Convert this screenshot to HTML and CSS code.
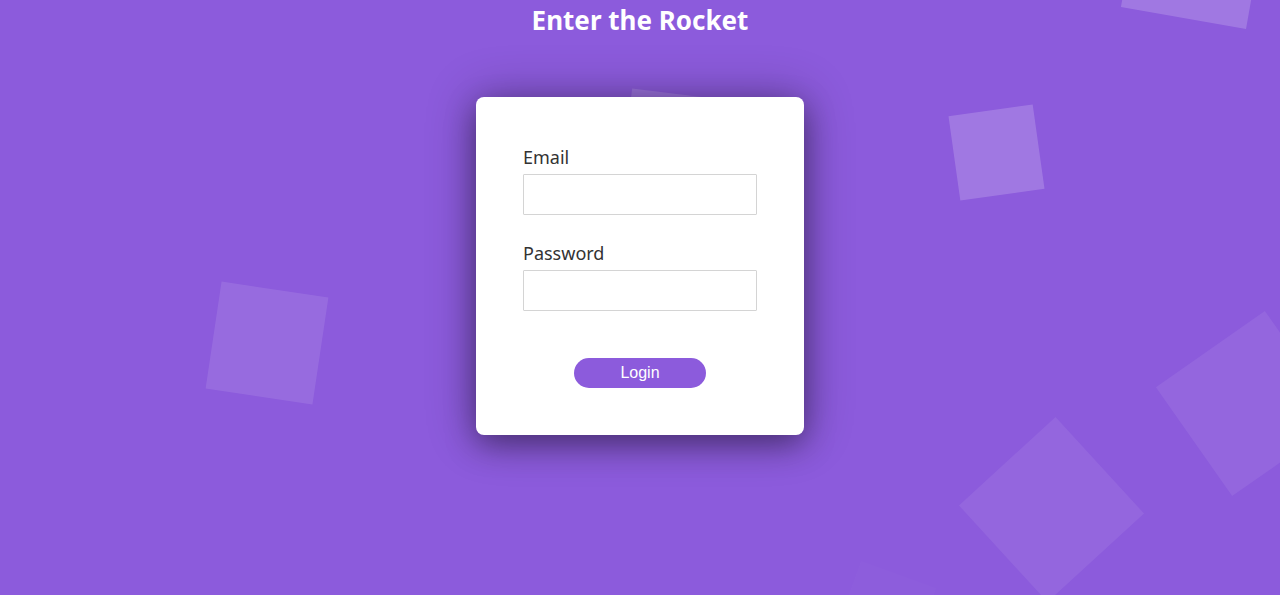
FILE: index.html
```html
<!DOCTYPE html>
<html lang="en">
<head>
    <meta charset="UTF-8">
    <meta name="viewport" content="width=device-width, initial-scale=1.0">
    <title>Enter the Rocket</title>
    <link rel="stylesheet" href="styles.css">
</head>
<body>
    <!-- floating background squares -->
    <ul class="squares">
        <li></li>
        <li></li>
        <li></li>
        <li></li>
        <li></li>
        <li></li>
        <li></li>
    </ul>
    <main class="page">
        <h1 class="title">Enter the Rocket</h1>
        <form class="login-card">
            <div class="field">
                <label for="email">Email</label>
                <input type="email" id="email">
            </div>
            <div class="field">
                <label for="password">Password</label>
                <input type="password" id="password">
            </div>
            <button type="submit" class="login-btn">Login</button>
        </form>
    </main>
</body>
</html>
```

FILE: styles.css
```css
html, body {
    height: 100%;
}

body {
    margin: 0;
    padding: 0;
    font-family: "Noto Sans", "Open Sans", sans-serif;
    background-color: #8c5bdc;
    overflow: hidden;
    position: relative;
}

.squares {
    position: absolute;
    top: 0;
    left: 0;
    width: 100%;
    height: 100%;
    margin: 0;
    padding: 0;
    list-style: none;
    overflow: hidden;
}

.squares li {
    position: absolute;
    display: block;
}

.squares li:nth-child(1) {
    width: 127px;
    height: 127px;
    left: 1131px;
    top: -108px;
    transform: rotate(10deg);
    background: rgba(255, 255, 255, 0.18);
}

.squares li:nth-child(2) {
    width: 85px;
    height: 85px;
    left: 954px;
    top: 110px;
    transform: rotate(-8deg);
    background: rgba(255, 255, 255, 0.18);
}

.squares li:nth-child(3) {
    width: 108px;
    height: 108px;
    left: 213px;
    top: 289px;
    transform: rotate(8.5deg);
    background: rgba(255, 255, 255, 0.1);
}

.squares li:nth-child(4) {
    width: 131px;
    height: 131px;
    left: 986px;
    top: 444px;
    transform: rotate(-42.5deg);
    background: rgba(255, 255, 255, 0.07);
}

.squares li:nth-child(5) {
    width: 133px;
    height: 133px;
    left: 1182px;
    top: 337px;
    transform: rotate(-35deg);
    background: rgba(255, 255, 255, 0.07);
}

.squares li:nth-child(6) {
    width: 80px;
    height: 80px;
    left: 627px;
    top: 93px;
    transform: rotate(7deg);
    background: rgba(255, 255, 255, 0.15);
}

.squares li:nth-child(7) {
    width: 80px;
    height: 80px;
    left: 845px;
    top: 572px;
    transform: rotate(20deg);
    background: rgba(255, 255, 255, 0.015);
}

.page {
    position: relative;
    display: flex;
    flex-direction: column;
    align-items: center;
}

.title {
    margin: 0;
    padding-top: 2px;
    font-size: 26px;
    line-height: 36px;
    font-weight: 700;
    color: #fff;
}

.login-card {
    margin-top: 59px;
    width: 328px;
    box-sizing: border-box;
    padding: 48px 47px 47px;
    background-color: #fff;
    border-radius: 8px;
    box-shadow: 0 10px 30px rgba(0, 0, 0, 0.35), 0 0 50px rgba(0, 0, 0, 0.3);
    display: flex;
    flex-direction: column;
    gap: 26px;
}

.field {
    display: flex;
    flex-direction: column;
    gap: 5px;
}

.field label {
    font-size: 18px;
    line-height: 24px;
    color: #333;
}

.field input {
    height: 41px;
    box-sizing: border-box;
    border: 1px solid #d4d4d4;
    border-radius: 1px;
    padding: 0 8px;
    font-size: 16px;
    outline: none;
}

.login-btn {
    align-self: center;
    margin-top: 21px;
    width: 132px;
    height: 30px;
    border: none;
    border-radius: 15px;
    background-color: #8c5bdc;
    color: #fff;
    font-family: "Liberation Sans", Arial, sans-serif;
    font-size: 16px;
    cursor: pointer;
}
```
